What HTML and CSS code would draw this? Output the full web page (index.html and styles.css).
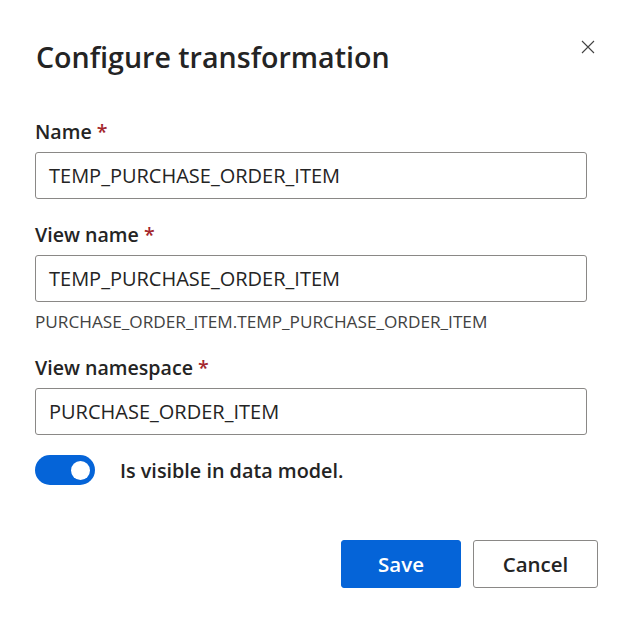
FILE: index.html
```html
<!DOCTYPE html>
<html lang="en">
<head>
    <meta charset="utf-8">
    <title>Configure transformation</title>
    <link rel="stylesheet" href="styles.css">
</head>
<body>

<div class="dialog">
    <div class="dialog-header">
        <h2 class="dialog-title">Configure transformation</h2>
        <button class="close-btn" aria-label="Close">
            <svg width="14" height="14" viewBox="0 0 14 14">
                <path d="M1 1 L13 13 M13 1 L1 13" stroke="#424242" stroke-width="1.1" fill="none"/>
            </svg>
        </button>
    </div>

    <div class="field">
        <label class="field-label">Name <span class="req">*</span></label>
        <div class="text-input">TEMP_PURCHASE_ORDER_ITEM</div>
    </div>

    <div class="field">
        <label class="field-label">View name <span class="req">*</span></label>
        <div class="text-input">TEMP_PURCHASE_ORDER_ITEM</div>
        <div class="field-hint">PURCHASE_ORDER_ITEM.TEMP_PURCHASE_ORDER_ITEM</div>
    </div>

    <div class="field">
        <label class="field-label">View namespace <span class="req">*</span></label>
        <div class="text-input">PURCHASE_ORDER_ITEM</div>
    </div>

    <div class="switch-row">
        <span class="switch"><span class="switch-knob"></span></span>
        <span class="switch-label">Is visible in data model.</span>
    </div>

    <div class="dialog-actions">
        <button class="btn btn-primary">Save</button>
        <button class="btn btn-secondary">Cancel</button>
    </div>
</div>

</body>
</html>
```

FILE: styles.css
```css
* {
    box-sizing: border-box;
}

body {
    margin: 0;
    background: #ffffff;
    font-family: "Open Sans", "Noto Sans", sans-serif;
    color: #242424;
}

.dialog {
    width: 633px;
    height: 626px;
    padding: 39px 46px 0 35px;
}

.dialog-header {
    display: flex;
    justify-content: space-between;
    align-items: flex-start;
}

.dialog-title {
    margin: 0 0 0 1px;
    font-size: 28.6px;
    line-height: 36px;
    font-weight: 600;
    color: #242424;
}

.close-btn {
    margin: 1px -9px 0 0;
    padding: 0;
    border: none;
    background: none;
    width: 16px;
    height: 16px;
}

.field {
    margin-top: 45px;
}

.field + .field {
    margin-top: 24px;
}

.field-label {
    display: block;
    font-size: 19.6px;
    line-height: 24px;
    font-weight: 600;
    margin-bottom: 8px;
}

.req {
    color: #a4262c;
    font-weight: 600;
}

.text-input {
    height: 47px;
    border: 1px solid #8a8886;
    border-radius: 3px;
    padding: 0 13px;
    font-size: 20px;
    line-height: 45px;
    color: #242424;
}

.field-hint {
    margin-top: 10px;
    font-size: 17.2px;
    line-height: 20px;
    color: #424242;
}

.switch-row {
    display: flex;
    align-items: center;
    margin-top: 20px;
}

.switch {
    display: flex;
    align-items: center;
    justify-content: flex-end;
    width: 60px;
    height: 30px;
    border-radius: 15px;
    background: #0564d8;
    padding-right: 5px;
}

.switch-knob {
    width: 19px;
    height: 19px;
    border-radius: 50%;
    background: #ffffff;
}

.switch-label {
    margin-left: 25px;
    font-size: 19.8px;
    font-weight: 600;
}

.dialog-actions {
    display: flex;
    justify-content: flex-end;
    gap: 12px;
    margin: 55px -11px 0 0;
}

.btn {
    height: 48px;
    border-radius: 3px;
    font-family: inherit;
    font-size: 20.5px;
    font-weight: 600;
}

.btn-primary {
    width: 120px;
    background: #0564d8;
    border: 1px solid #0564d8;
    color: #ffffff;
}

.btn-secondary {
    width: 125px;
    background: #ffffff;
    border: 1px solid #8a8886;
    color: #242424;
}
```
